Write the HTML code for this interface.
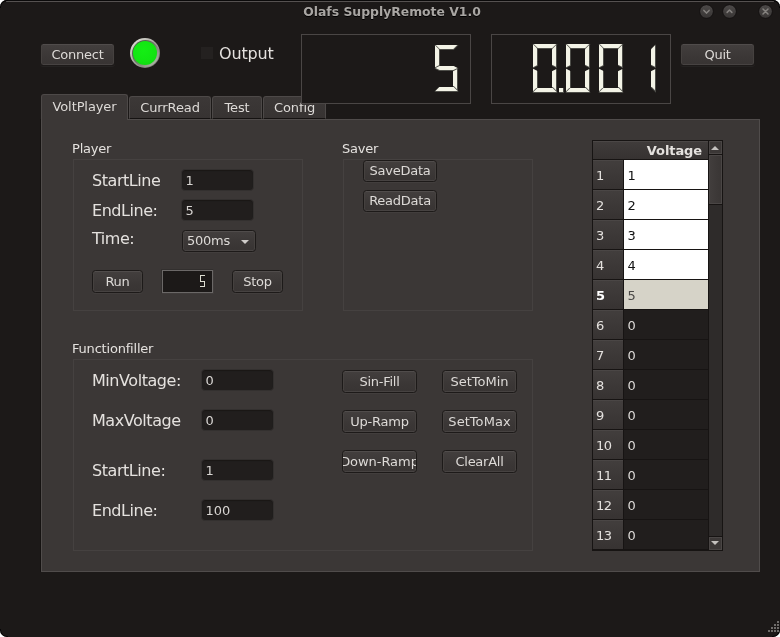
<!DOCTYPE html>
<html lang="en">
<head>
<meta charset="utf-8">
<title>Olafs SupplyRemote V1.0</title>
<style>
*{box-sizing:border-box;margin:0;padding:0}
html,body{width:780px;height:637px;overflow:hidden;background:#fff}
body{font-family:"DejaVu Sans","Liberation Sans",sans-serif;font-size:13px;color:#dddad7;position:relative}
.abs{position:absolute}
#win{will-change:transform;position:absolute;left:0;top:0;width:780px;height:637px;background:#1c1918;box-shadow:inset 0 1px 0 #0b0a0a;border-radius:7px;overflow:hidden}
#topline{position:absolute;left:6px;right:6px;top:1px;height:1px;background:#555150}
#title{position:absolute;left:2px;width:780px;top:4px;height:16px;line-height:16px;text-align:center;font-weight:bold;font-size:12.4px;color:#a9a6a3;text-shadow:0 1px 0 #000}
.wb{position:absolute;top:3.5px;width:15px;height:15px}
.btn{position:absolute;height:23px;letter-spacing:-0.25px;border:1px solid #1d1a19;border-radius:3.5px;background:linear-gradient(#433f3e,#3b3736 60%,#383433);box-shadow:inset 0 1px 0 #504c4b,inset 0 -1px 0 #474342,inset 1px 0 0 #45413f,inset -1px 0 0 #45413f,0 1px 0 rgba(255,255,255,0.04);text-align:center;line-height:21px;font-size:13px;color:#dddad7;white-space:nowrap;overflow:hidden}
.lbl{position:absolute;font-size:16px;letter-spacing:-0.45px;line-height:20px;margin-top:1px;white-space:nowrap;color:#e4e1de}
.small{position:absolute;font-size:13px;letter-spacing:-0.2px;line-height:16px;margin-top:1px;white-space:nowrap;color:#e4e1de}
.inp{position:absolute;width:71px;height:20px;margin:-1px 0 0 -1px;box-sizing:content-box;border:1px solid #33302f;border-radius:4px;background:#211e1d;box-shadow:inset 0 1px 1px #1a1716;font-size:13px;line-height:22px;padding-left:0;text-indent:3.5px;color:#d8d5d2}
.grp{position:absolute;border:1px solid #454140}
#pane{position:absolute;left:41px;top:119px;width:719px;height:453px;background:#3b3736;border:1px solid #504c4b;box-shadow:-1px 0 0 #151211}
.tab{position:absolute;border:1px solid #4d4948;border-bottom:1px solid #151211;border-radius:3px 3px 0 0;background:linear-gradient(#3c3837,#373332);text-align:center;font-size:13px;letter-spacing:-0.1px;color:#dddad7;white-space:nowrap}
.lcd{position:absolute;border:1px solid #4a4645;background:#1c1918}

.dg{position:absolute}
.dg i{position:absolute;left:0;top:0;width:100%;height:100%;background:#f3f3e6}
.dg i.dk{background:#4e4e49}
.dg.tiny i{background:#dcdcd0}
#tbl{position:absolute;left:592px;top:140px;width:131px;height:411px;background:#171413}
#tbl .hdr{position:absolute;left:1px;top:1px;width:115px;height:18px;background:linear-gradient(#403c3b,#363231);box-shadow:inset 0 1px 0 #4b4746;font-weight:bold;font-size:13px;letter-spacing:-0.1px;line-height:19px;text-align:right;padding-right:6px;color:#e4e1de}
.rh{position:absolute;left:1px;width:30px;height:29px;background:linear-gradient(#423e3d,#373332);box-shadow:inset 0 1px 0 #4a4645;font-size:13px;letter-spacing:-0.5px;line-height:31px;padding-left:3px;color:#e4e1de}
.rh.hsel{font-weight:bold;color:#fff}
.cell{position:absolute;left:32px;width:84px;height:29px;font-size:13px;line-height:31px;padding-left:3.5px}
.cell.w{background:#fff;color:#111}
.cell.sel{background:#d6d3c8;color:#4a4846}
.cell.d{background:#211e1d;color:#dddad7}
#sb{position:absolute;left:709px;top:141px;width:13px;height:409px;background:#2e2b2a}
.sbb{position:absolute;left:709px;width:13px;height:13px;background:#3b3736;box-shadow:inset 0 0 0 1px #4a4645}
.tri{position:absolute;width:0;height:0;border-left:4.5px solid transparent;border-right:4.5px solid transparent}
.sr{position:absolute;width:1px;height:1px;overflow:hidden;clip:rect(0 0 0 0);clip-path:inset(50%);white-space:nowrap}
#grip i{position:absolute;width:2px;height:2px;background:#6f6c6a}
.cn{position:absolute;width:8px;height:8px;border:0 solid #060505}
</style>
</head>
<body>
<div id="win">
<div id="topline"></div>
<div id="title">Olafs SupplyRemote V1.0</div>
<svg class="wb" style="left:699px" viewBox="0 0 15 15"><defs><linearGradient id="g699" x1="0" y1="0" x2="0" y2="1"><stop offset="0" stop-color="#4c4948"/><stop offset="1" stop-color="#383534"/></linearGradient></defs><circle cx="7.5" cy="7.5" r="6.6" fill="url(#g699)"/><circle cx="7.5" cy="7.5" r="6.9" fill="none" stroke="#141211" stroke-width="0.8"/><path d="M4.9 6.4 L7.5 9.1 L10.1 6.4" fill="none" stroke="#85827f" stroke-width="1.5" stroke-linecap="round" stroke-linejoin="round"/></svg>
<svg class="wb" style="left:722px" viewBox="0 0 15 15"><defs><linearGradient id="g722" x1="0" y1="0" x2="0" y2="1"><stop offset="0" stop-color="#4c4948"/><stop offset="1" stop-color="#383534"/></linearGradient></defs><circle cx="7.5" cy="7.5" r="6.6" fill="url(#g722)"/><circle cx="7.5" cy="7.5" r="6.9" fill="none" stroke="#141211" stroke-width="0.8"/><path d="M5.1 8.4 L7.5 6 L9.9 8.4" fill="none" stroke="#85827f" stroke-width="1.5" stroke-linecap="round" stroke-linejoin="round"/></svg>
<svg class="wb" style="left:758px" viewBox="0 0 15 15"><defs><linearGradient id="g758" x1="0" y1="0" x2="0" y2="1"><stop offset="0" stop-color="#4c4948"/><stop offset="1" stop-color="#383534"/></linearGradient></defs><circle cx="7.5" cy="7.5" r="6.6" fill="url(#g758)"/><circle cx="7.5" cy="7.5" r="6.9" fill="none" stroke="#141211" stroke-width="0.8"/><path d="M5 5 L10 10 M10 5 L5 10" fill="none" stroke="#85827f" stroke-width="1.5" stroke-linecap="round"/></svg>

<div class="btn" style="left:40px;top:43px;width:75px">Connect</div>
<div class="abs" id="led" style="left:130px;top:38px;width:30px;height:30px;border-radius:50%;background:linear-gradient(135deg,#d6d6ce 15%,#a3a19c 50%,#77756f 85%)"><div class="abs" style="left:1.5px;top:1.5px;width:27px;height:27px;border-radius:50%;background:linear-gradient(135deg,#4f584a 15%,#6f7a69 50%,#a9b3a2 85%)"></div><div class="abs" style="left:2.8px;top:2.8px;width:24.4px;height:24.4px;border-radius:50%;background:radial-gradient(circle at 45% 40%,#14ee14 0,#12e612 55%,#0fd40f 100%)"></div></div>
<div class="abs" style="left:201px;top:47px;width:12px;height:12px;background:#242120"></div>
<div class="lbl" style="left:219px;top:43px;letter-spacing:-0.15px">Output</div>

<div class="btn" style="left:680px;top:43px;width:75px">Quit</div>

<!-- tabs -->
<div class="tab" style="left:129px;top:96px;width:82px;height:23px;line-height:21px">CurrRead</div>
<div class="tab" style="left:212px;top:96px;width:50px;height:23px;line-height:21px">Test</div>
<div class="tab" style="left:263px;top:96px;width:63px;height:23px;line-height:21px">Config</div>
<div id="pane"></div>
<div class="tab" style="left:41px;top:94px;width:87px;height:26px;line-height:24px;background:#3b3736;border-bottom:none">VoltPlayer</div>

<div class="lcd" role="img" aria-label="5" style="left:301px;top:34px;width:170px;height:70px"><span class="sr">5</span><div class="dg" style="left:132px;top:9px;width:26px;height:50px"><i class="dk" style="clip-path:polygon(0.29px 1px,24.71px 1px,19.71px 6px,5.29px 6px)"></i><i style="clip-path:polygon(1.71px 1px,23.29px 1px,19.29px 5px,5.71px 5px)"></i><i class="dk" style="clip-path:polygon(1px 1.29px,6px 6.29px,6px 21.81px,1px 24.31px)"></i><i style="clip-path:polygon(1px 1.29px,5px 5.29px,5px 21.19px,1px 23.19px)"></i><i class="dk" style="clip-path:polygon(0.38px 24.5px,5.38px 22px,19.62px 22px,24.62px 24.5px,19.62px 27px,5.38px 27px)"></i><i style="clip-path:polygon(1.5px 23.94px,5.38px 22px,19.62px 22px,23.5px 23.94px,19.38px 26px,5.62px 26px)"></i><i class="dk" style="clip-path:polygon(24px 24.69px,24px 47.71px,19px 42.71px,19px 27.19px)"></i><i style="clip-path:polygon(23px 25.19px,23px 45.29px,19px 41.29px,19px 27.19px)"></i><i class="dk" style="clip-path:polygon(0.29px 48px,5.29px 43px,19.71px 43px,24.71px 48px)"></i><i style="clip-path:polygon(1.29px 47px,5.29px 43px,19.71px 43px,23.71px 47px)"></i></div></div>
<div class="lcd" role="img" aria-label="0.001" style="left:491px;top:34px;width:180px;height:70px"><span class="sr">0.001</span><div class="dg" style="left:40px;top:8px;width:27px;height:52px"><i class="dk" style="clip-path:polygon(0.29px 1px,25.71px 1px,20.71px 6px,5.29px 6px)"></i><i style="clip-path:polygon(1.71px 1px,24.29px 1px,20.29px 5px,5.71px 5px)"></i><i class="dk" style="clip-path:polygon(1px 1.29px,6px 6.29px,6px 22.81px,1px 25.31px)"></i><i style="clip-path:polygon(1px 1.29px,5px 5.29px,5px 22.19px,1px 24.19px)"></i><i class="dk" style="clip-path:polygon(25px 1.29px,25px 25.31px,20px 22.81px,20px 6.29px)"></i><i style="clip-path:polygon(24px 2.29px,24px 23.69px,20px 21.69px,20px 6.29px)"></i><i class="dk" style="clip-path:polygon(1px 25.69px,6px 28.19px,6px 44.71px,1px 49.71px)"></i><i style="clip-path:polygon(1px 25.69px,5px 27.69px,5px 44.29px,1px 48.29px)"></i><i class="dk" style="clip-path:polygon(25px 25.69px,25px 49.71px,20px 44.71px,20px 28.19px)"></i><i style="clip-path:polygon(24px 26.19px,24px 47.29px,20px 43.29px,20px 28.19px)"></i><i class="dk" style="clip-path:polygon(0.29px 50px,5.29px 45px,20.71px 45px,25.71px 50px)"></i><i style="clip-path:polygon(1.29px 49px,5.29px 45px,20.71px 45px,24.71px 49px)"></i></div><div class="dg" style="left:67px;top:53px;width:5px;height:5px"><i class="dk"></i><i style="width:4px;height:4px"></i></div><div class="dg" style="left:73px;top:8px;width:27px;height:52px"><i class="dk" style="clip-path:polygon(0.29px 1px,25.71px 1px,20.71px 6px,5.29px 6px)"></i><i style="clip-path:polygon(1.71px 1px,24.29px 1px,20.29px 5px,5.71px 5px)"></i><i class="dk" style="clip-path:polygon(1px 1.29px,6px 6.29px,6px 22.81px,1px 25.31px)"></i><i style="clip-path:polygon(1px 1.29px,5px 5.29px,5px 22.19px,1px 24.19px)"></i><i class="dk" style="clip-path:polygon(25px 1.29px,25px 25.31px,20px 22.81px,20px 6.29px)"></i><i style="clip-path:polygon(24px 2.29px,24px 23.69px,20px 21.69px,20px 6.29px)"></i><i class="dk" style="clip-path:polygon(1px 25.69px,6px 28.19px,6px 44.71px,1px 49.71px)"></i><i style="clip-path:polygon(1px 25.69px,5px 27.69px,5px 44.29px,1px 48.29px)"></i><i class="dk" style="clip-path:polygon(25px 25.69px,25px 49.71px,20px 44.71px,20px 28.19px)"></i><i style="clip-path:polygon(24px 26.19px,24px 47.29px,20px 43.29px,20px 28.19px)"></i><i class="dk" style="clip-path:polygon(0.29px 50px,5.29px 45px,20.71px 45px,25.71px 50px)"></i><i style="clip-path:polygon(1.29px 49px,5.29px 45px,20.71px 45px,24.71px 49px)"></i></div><div class="dg" style="left:106px;top:8px;width:27px;height:52px"><i class="dk" style="clip-path:polygon(0.29px 1px,25.71px 1px,20.71px 6px,5.29px 6px)"></i><i style="clip-path:polygon(1.71px 1px,24.29px 1px,20.29px 5px,5.71px 5px)"></i><i class="dk" style="clip-path:polygon(1px 1.29px,6px 6.29px,6px 22.81px,1px 25.31px)"></i><i style="clip-path:polygon(1px 1.29px,5px 5.29px,5px 22.19px,1px 24.19px)"></i><i class="dk" style="clip-path:polygon(25px 1.29px,25px 25.31px,20px 22.81px,20px 6.29px)"></i><i style="clip-path:polygon(24px 2.29px,24px 23.69px,20px 21.69px,20px 6.29px)"></i><i class="dk" style="clip-path:polygon(1px 25.69px,6px 28.19px,6px 44.71px,1px 49.71px)"></i><i style="clip-path:polygon(1px 25.69px,5px 27.69px,5px 44.29px,1px 48.29px)"></i><i class="dk" style="clip-path:polygon(25px 25.69px,25px 49.71px,20px 44.71px,20px 28.19px)"></i><i style="clip-path:polygon(24px 26.19px,24px 47.29px,20px 43.29px,20px 28.19px)"></i><i class="dk" style="clip-path:polygon(0.29px 50px,5.29px 45px,20.71px 45px,25.71px 50px)"></i><i style="clip-path:polygon(1.29px 49px,5.29px 45px,20.71px 45px,24.71px 49px)"></i></div><div class="dg" style="left:139px;top:8px;width:27px;height:52px"><i class="dk" style="clip-path:polygon(25px 1.29px,25px 25.31px,20px 22.81px,20px 6.29px)"></i><i style="clip-path:polygon(24px 2.29px,24px 23.69px,20px 21.69px,20px 6.29px)"></i><i class="dk" style="clip-path:polygon(25px 25.69px,25px 49.71px,20px 44.71px,20px 28.19px)"></i><i style="clip-path:polygon(24px 26.19px,24px 47.29px,20px 43.29px,20px 28.19px)"></i></div></div>

<!-- Player group -->
<div class="small" style="left:72px;top:140px">Player</div>
<div class="grp" style="left:73px;top:159px;width:230px;height:152px"></div>
<div class="lbl" style="left:92px;top:170px">StartLine</div>
<div class="lbl" style="left:92px;top:200px">EndLine:</div>
<div class="lbl" style="left:92px;top:228px">Time:</div>
<div class="inp" style="left:182px;top:170px">1</div>
<div class="inp" style="left:182px;top:200px">5</div>
<div class="btn" style="left:182px;top:230px;height:22px;line-height:20px;width:74px;text-align:left;padding-left:4px">500ms</div>
<div class="tri" style="left:241px;top:240px;border-top:4px solid #cfccc9;border-left-width:4px;border-right-width:4px"></div>
<div class="btn" style="left:92px;top:270px;width:51px">Run</div>
<div class="btn" style="left:232px;top:270px;width:51px">Stop</div>
<div class="abs" role="img" aria-label="5" style="left:161px;top:269px;width:53px;height:25px;border:1px solid #322f2e;border-right-color:#403c3b;border-bottom-color:#403c3b"><div class="abs" style="left:0;top:0;width:51px;height:23px;border:1px solid #6b6867;background:#1c1918"><div class="dg tiny" style="left:37px;top:4px;width:5px;height:12px"><i style="left:0px;top:0px;width:5px;height:1px"></i><i style="left:0px;top:1px;width:1px;height:5px"></i><i style="left:0px;top:6px;width:5px;height:1px"></i><i style="left:4px;top:7px;width:1px;height:4px"></i><i style="left:0px;top:11px;width:5px;height:1px"></i></div></div><span class="sr">5</span></div>

<!-- Saver group -->
<div class="small" style="left:342px;top:140px">Saver</div>
<div class="grp" style="left:343px;top:159px;width:190px;height:152px"></div>
<div class="btn" style="left:363px;top:160px;height:22px;line-height:20px;width:74px">SaveData</div>
<div class="btn" style="left:363px;top:190px;height:22px;line-height:20px;width:74px">ReadData</div>

<!-- Functionfiller -->
<div class="small" style="left:72px;top:340px">Functionfiller</div>
<div class="grp" style="left:73px;top:359px;width:460px;height:192px"></div>
<div class="lbl" style="left:92px;top:370px">MinVoltage:</div>
<div class="lbl" style="left:92px;top:410px">MaxVoltage</div>
<div class="lbl" style="left:92px;top:460px">StartLine:</div>
<div class="lbl" style="left:92px;top:500px">EndLine:</div>
<div class="inp" style="left:202px;top:370px">0</div>
<div class="inp" style="left:202px;top:410px">0</div>
<div class="inp" style="left:202px;top:460px">1</div>
<div class="inp" style="left:202px;top:500px">100</div>
<div class="btn" style="left:342px;top:370px;width:75px">Sin-Fill</div>
<div class="btn" style="left:342px;top:410px;width:75px">Up-Ramp</div>
<div class="btn" style="left:342px;top:450px;width:75px;display:flex;justify-content:center;letter-spacing:-0.05px">Down-Ramp</div>
<div class="btn" style="left:442px;top:370px;width:75px;letter-spacing:0">SetToMin</div>
<div class="btn" style="left:442px;top:410px;width:75px;letter-spacing:0.05px">SetToMax</div>
<div class="btn" style="left:442px;top:450px;width:75px">ClearAll</div>

<!-- table -->
<div id="tbl"><div class="hdr">Voltage</div>
<div class="rh" style="top:20px">1</div><div class="cell w" style="top:20px">1</div>
<div class="rh" style="top:50px">2</div><div class="cell w" style="top:50px">2</div>
<div class="rh" style="top:80px">3</div><div class="cell w" style="top:80px">3</div>
<div class="rh" style="top:110px">4</div><div class="cell w" style="top:110px">4</div>
<div class="rh hsel" style="top:140px">5</div><div class="cell sel" style="top:140px">5</div>
<div class="rh" style="top:170px">6</div><div class="cell d" style="top:170px">0</div>
<div class="rh" style="top:200px">7</div><div class="cell d" style="top:200px">0</div>
<div class="rh" style="top:230px">8</div><div class="cell d" style="top:230px">0</div>
<div class="rh" style="top:260px">9</div><div class="cell d" style="top:260px">0</div>
<div class="rh" style="top:290px">10</div><div class="cell d" style="top:290px">0</div>
<div class="rh" style="top:320px">11</div><div class="cell d" style="top:320px">0</div>
<div class="rh" style="top:350px">12</div><div class="cell d" style="top:350px">0</div>
<div class="rh" style="top:380px">13</div><div class="cell d" style="top:380px">0</div>

</div>
<div id="sb"></div>
<div class="sbb" style="top:141px"></div>
<div class="abs" style="left:709px;top:154px;width:13px;height:1px;background:#171413"></div>
<div class="tri" style="left:711px;top:146px;border-bottom:4.5px solid #c4c1be"></div>
<div class="abs" id="thumb" style="left:709px;top:155px;width:13px;height:49px;background:linear-gradient(90deg,#423e3d,#393534);box-shadow:inset 0 0 0 1px #4a4645"></div>
<div class="abs" style="left:709px;top:204px;width:13px;height:1px;background:#171413"></div>
<div class="abs" style="left:709px;top:536px;width:13px;height:1px;background:#171413"></div>
<div class="sbb" style="top:537px"></div>
<div class="tri" style="left:711px;top:541px;border-top:4.5px solid #c4c1be"></div>


<div class="cn" style="left:0;top:0;border-top-width:1px;border-left-width:1px;border-top-left-radius:7px"></div>
<div class="cn" style="right:0;top:0;border-top-width:1px;border-right-width:1px;border-top-right-radius:7px"></div>
<div class="cn" style="left:0;bottom:0;border-bottom-width:1px;border-left-width:1px;border-bottom-left-radius:7px"></div>
<div class="cn" style="right:0;bottom:0;border-bottom-width:1px;border-right-width:1px;border-bottom-right-radius:7px"></div>
<div id="grip"><i style="left:777px;top:621px"></i><i style="left:774px;top:624px"></i><i style="left:777px;top:624px"></i><i style="left:771px;top:627px"></i><i style="left:774px;top:627px"></i><i style="left:777px;top:627px"></i><i style="left:768px;top:630px"></i><i style="left:771px;top:630px"></i><i style="left:774px;top:630px"></i><i style="left:777px;top:630px"></i></div>
</div>
</body>
</html>
